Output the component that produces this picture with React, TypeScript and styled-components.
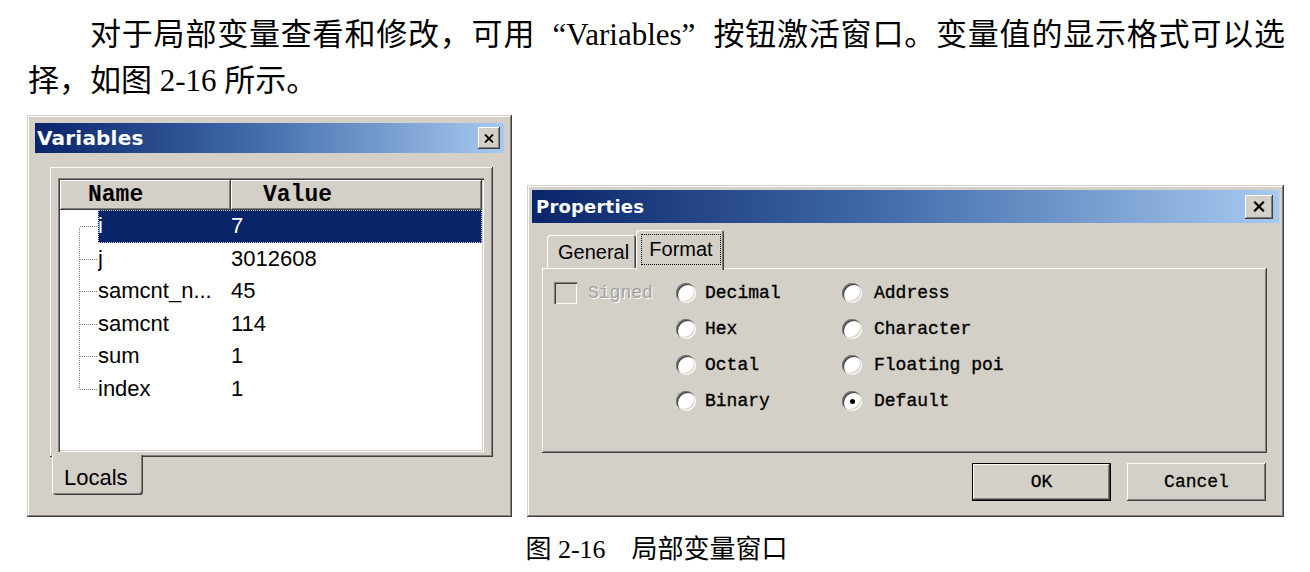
import React from 'react'
import styled, { createGlobalStyle } from 'styled-components'

const GlobalStyle = createGlobalStyle`
    html, body {
        margin: 0;
        padding: 0;
        background: #FFFFFF;
    }
    body {
        font-family: "Liberation Serif", "Noto Sans CJK SC", serif;
        color: #000000;
    }
`

const FACE = '#D4D0C8'
const RAISED = `inset -1px -1px #404040, inset 1px 1px #FFFFFF, inset -2px -2px #808080`
const SUNKEN = `inset 1px 1px #808080, inset 2px 2px #404040, inset -1px -1px #FFFFFF, inset -2px -2px ${FACE}`

const Page = styled.div`
    width: 1310px;
    height: 572px;
    box-sizing: border-box;
    padding: 12px 25px 0 28px;
    overflow: hidden;
`

const TextLine = styled.div<{ $first?: boolean }>`
    font-size: 31px;
    line-height: 46px;
    padding-left: ${p => (p.$first ? '62px' : '0')};
    text-align: ${p => (p.$first ? 'justify' : 'left')};
    text-align-last: ${p => (p.$first ? 'justify' : 'auto')};
`

const Quote = styled.span<{ $open?: boolean }>`
    display: inline-block;
    width: 1em;
    text-align: ${p => (p.$open ? 'right' : 'left')};
    text-align-last: ${p => (p.$open ? 'right' : 'left')};
`

const Figures = styled.div`
    display: flex;
    align-items: flex-end;
    gap: 15px;
    margin: 11px 0 0 -1px;
`

const Frame = styled.div<{ $width: number; $height: number; $pad: number }>`
    box-sizing: border-box;
    width: ${p => p.$width}px;
    height: ${p => p.$height}px;
    padding: ${p => p.$pad}px;
    background: ${FACE};
    box-shadow: inset -1px -1px #404040, inset 1px 1px ${FACE}, inset -2px -2px #808080, inset 2px 2px #FFFFFF;
    display: flex;
    flex-direction: column;
`

const TitleBar = styled.div<{ $height: number; $size: number; $padLeft: number; $padRight: number }>`
    flex: none;
    height: ${p => p.$height}px;
    display: flex;
    align-items: center;
    justify-content: space-between;
    padding: 0 ${p => p.$padRight}px 0 ${p => p.$padLeft}px;
    background: linear-gradient(90deg, #0A246A 0%, #3F68A8 45%, #A6CAF0 100%);
    color: #FFFFFF;
    font-family: "DejaVu Sans", "Liberation Sans", sans-serif;
    font-weight: 700;
    font-size: ${p => p.$size}px;
    letter-spacing: 0.2px;
`

const CloseBox = styled.div<{ $w: number; $h: number }>`
    width: ${p => p.$w}px;
    height: ${p => p.$h}px;
    background: ${FACE};
    box-shadow: ${RAISED};
    display: flex;
    align-items: center;
    justify-content: center;
`

/* ---------- Variables window ---------- */

const VarBody = styled.div`
    flex: 1;
    display: flex;
    flex-direction: column;
    padding: 14px 11px 0 15px;
`

const VarPanel = styled.div`
    flex: none;
    box-sizing: border-box;
    height: 290px;
    padding: 11px 9px 5px 8px;
    background: ${FACE};
    box-shadow: ${RAISED};
    display: flex;
`

const ListView = styled.div`
    flex: 1;
    background: #FFFFFF;
    padding: 2px;
    box-shadow: ${SUNKEN};
    display: flex;
    flex-direction: column;
`

const ListHeader = styled.div`
    flex: none;
    display: flex;
    height: 30px;
`

const HeaderCell = styled.div<{ $width?: number; $indent: number }>`
    ${p => (p.$width ? `width: ${p.$width}px; flex: none;` : 'flex: 1;')}
    box-sizing: border-box;
    padding-left: ${p => p.$indent}px;
    display: flex;
    align-items: center;
    background: ${FACE};
    box-shadow: ${RAISED};
    font-family: "Liberation Mono", monospace;
    font-weight: 700;
    font-size: 23px;
`

const ListRow = styled.div`
    height: 32.5px;
    display: flex;
    font-family: "Liberation Sans", sans-serif;
    font-size: 22px;
`

const Gutter = styled.svg`
    flex: none;
    width: 38px;
    height: 100%;
`

const RowBody = styled.div<{ $selected?: boolean }>`
    flex: 1;
    display: flex;
    align-items: center;
    background: ${p => (p.$selected ? '#0A246A' : 'transparent')};
    color: ${p => (p.$selected ? '#FFFFFF' : '#000000')};
    outline: ${p => (p.$selected ? '1px dotted #C8CCD8' : 'none')};
    outline-offset: -1px;
`

const NameCell = styled.div`
    width: 133px;
    flex: none;
    white-space: nowrap;
    overflow: hidden;
`

const ValueCell = styled.div`
    flex: 1;
    white-space: nowrap;
`

const BottomTab = styled.div`
    align-self: flex-start;
    box-sizing: border-box;
    width: 91px;
    height: 40px;
    margin: -2px 0 0 2px;
    padding: 6px 0 0 12px;
    display: flex;
    align-items: center;
    background: ${FACE};
    border-radius: 0 0 3px 3px;
    box-shadow: inset 1px 0 #FFFFFF, inset -1px -1px #404040, inset -2px -2px #808080;
    font-family: "Liberation Sans", sans-serif;
    font-size: 22px;
`

/* ---------- Properties dialog ---------- */

const PropsBody = styled.div`
    flex: 1;
    display: flex;
    flex-direction: column;
    padding: 7px 12px 0 10px;
`

const TabStrip = styled.div`
    flex: none;
    display: flex;
    align-items: flex-end;
    height: 40px;
    margin-bottom: -2px;
    padding-left: 5px;
`

const TopTab = styled.div<{ $active?: boolean; $width: number }>`
    box-sizing: border-box;
    width: ${p => p.$width}px;
    height: ${p => (p.$active ? 40 : 33)}px;
    margin-bottom: ${p => (p.$active ? 0 : 2)}px;
    padding: ${p => (p.$active ? '0 3px 2px 5px' : '2px 0 0 11px')};
    display: flex;
    align-items: center;
    background: ${FACE};
    border-radius: 3px 3px 0 0;
    box-shadow: inset 1px 1px #FFFFFF, inset -1px 0 #404040, inset -2px 0 #808080;
    font-family: "Liberation Sans", sans-serif;
    font-size: 20px;
    position: relative;
    z-index: ${p => (p.$active ? 1 : 0)};
`

const FocusLabel = styled.div`
    width: 80px;
    height: 31px;
    display: flex;
    align-items: center;
    justify-content: center;
    outline: 1px dotted #000000;
    outline-offset: -1px;
`

const PropsPanel = styled.div`
    flex: none;
    box-sizing: border-box;
    height: 185px;
    background: ${FACE};
    box-shadow: ${RAISED};
`

const FormatGrid = styled.div`
    display: grid;
    grid-template-columns: 122px 166px 1fr;
    grid-auto-rows: 36px;
    align-items: center;
    padding: 7px 0 0 12px;
    font-family: "Liberation Mono", monospace;
    font-size: 18px;
`

const CheckCell = styled.div`
    grid-column: 1;
    display: flex;
    align-items: center;
    gap: 11px;
`

const CheckBox = styled.div`
    width: 23px;
    height: 22px;
    background: ${FACE};
    box-shadow: ${SUNKEN};
`

const DisabledText = styled.span`
    color: #A0A0A0;
    text-shadow: 1px 1px #FFFFFF;
`

const RadioCell = styled.div<{ $col: number }>`
    grid-column: ${p => p.$col};
    display: flex;
    align-items: center;
    gap: ${p => (p.$col === 2 ? 9 : 12)}px;
`

const RadioLabel = styled.span`
    color: #000000;
    -webkit-text-stroke: 0.35px #000000;
`

const RadioDot = styled.div<{ $on?: boolean }>`
    width: 20px;
    height: 20px;
    border-radius: 50%;
    background: #FFFFFF;
    box-shadow: inset 1px 1px 0 #808080, inset 2px 2px 0 #404040, inset -1px -1px 0 #FFFFFF, inset -2px -2px 0 ${FACE};
    display: flex;
    align-items: center;
    justify-content: center;
    &::after {
        content: '';
        width: 5px;
        height: 5px;
        border-radius: 50%;
        background: ${p => (p.$on ? '#000000' : 'transparent')};
    }
`

const ButtonRow = styled.div`
    display: flex;
    justify-content: flex-end;
    gap: 16px;
    margin-top: 10px;
    padding-right: 1px;
`

const PushButton = styled.div<{ $default?: boolean }>`
    box-sizing: border-box;
    width: 139px;
    height: 38px;
    display: flex;
    align-items: center;
    justify-content: center;
    background: ${FACE};
    box-shadow: ${p =>
        p.$default
            ? 'inset 0 0 0 1px #000000, inset -2px -2px #404040, inset 2px 2px #FFFFFF, inset -3px -3px #808080'
            : RAISED};
    font-family: "Liberation Mono", monospace;
    font-size: 18px;
    -webkit-text-stroke: 0.3px #000000;
`

const Caption = styled.div`
    margin-top: 18px;
    text-align: center;
    font-size: 26px;
    line-height: 30px;
`

const CrossIcon = ({ size }: { size: number }) => (
    <svg width={size} height={size - 1} viewBox="0 0 10 9">
        <path d="M1 0.5 L9 8.5 M9 0.5 L1 8.5" stroke="#000" strokeWidth={1.8} fill="none" />
    </svg>
)

const locals = [
    { name: 'i', value: '7' },
    { name: 'j', value: '3012608' },
    { name: 'samcnt_n...', value: '45' },
    { name: 'samcnt', value: '114' },
    { name: 'sum', value: '1' },
    { name: 'index', value: '1' },
]

const formats = [
    { label: 'Decimal', col: 2 },
    { label: 'Address', col: 3 },
    { label: 'Hex', col: 2 },
    { label: 'Character', col: 3 },
    { label: 'Octal', col: 2 },
    { label: 'Floating poi', col: 3 },
    { label: 'Binary', col: 2 },
    { label: 'Default', col: 3, on: true },
]

export default function App() {
    return (
        <Page>
            <GlobalStyle />
            <TextLine $first>
                对于局部变量查看和修改，可用<Quote $open>“</Quote>Variables<Quote>”</Quote>按钮激活窗口。变量值的显示格式可以选
            </TextLine>
            <TextLine>择，如图 2-16 所示。</TextLine>

            <Figures>
                <Frame $width={485} $height={402} $pad={8}>
                    <TitleBar $height={30} $size={20} $padLeft={2} $padRight={4}>
                        <span>Variables</span>
                        <CloseBox $w={22} $h={22}><CrossIcon size={10} /></CloseBox>
                    </TitleBar>
                    <VarBody>
                        <VarPanel>
                            <ListView>
                                <ListHeader>
                                    <HeaderCell $width={171} $indent={28}>Name</HeaderCell>
                                    <HeaderCell $indent={32}>Value</HeaderCell>
                                </ListHeader>
                                {locals.map((v, i) => (
                                    <ListRow key={v.name}>
                                        <Gutter>
                                            <line x1={19.5} y1={i === 0 ? '55%' : '0'} x2={19.5} y2={i === locals.length - 1 ? '50%' : '100%'} stroke="#808080" strokeDasharray="1 1" />
                                            <line x1={20} y1={16.5} x2={37} y2={16.5} stroke="#808080" strokeDasharray="1 1" />
                                        </Gutter>
                                        <RowBody $selected={i === 0}>
                                            <NameCell>{v.name}</NameCell>
                                            <ValueCell>{v.value}</ValueCell>
                                        </RowBody>
                                    </ListRow>
                                ))}
                            </ListView>
                        </VarPanel>
                        <BottomTab>Locals</BottomTab>
                    </VarBody>
                </Frame>

                <Frame $width={757} $height={332} $pad={5}>
                    <TitleBar $height={33} $size={18} $padLeft={4} $padRight={6}>
                        <span>Properties</span>
                        <CloseBox $w={28} $h={24}><CrossIcon size={12} /></CloseBox>
                    </TitleBar>
                    <PropsBody>
                        <TabStrip>
                            <TopTab $width={89}>General</TopTab>
                            <TopTab $width={88} $active><FocusLabel>Format</FocusLabel></TopTab>
                        </TabStrip>
                        <PropsPanel>
                            <FormatGrid>
                                <CheckCell>
                                    <CheckBox />
                                    <DisabledText>Signed</DisabledText>
                                </CheckCell>
                                {formats.map(f => (
                                    <RadioCell key={f.label} $col={f.col}>
                                        <RadioDot $on={f.on} />
                                        <RadioLabel>{f.label}</RadioLabel>
                                    </RadioCell>
                                ))}
                            </FormatGrid>
                        </PropsPanel>
                        <ButtonRow>
                            <PushButton $default>OK</PushButton>
                            <PushButton>Cancel</PushButton>
                        </ButtonRow>
                    </PropsBody>
                </Frame>
            </Figures>

            <Caption>图 2-16　局部变量窗口</Caption>
        </Page>
    )
}
